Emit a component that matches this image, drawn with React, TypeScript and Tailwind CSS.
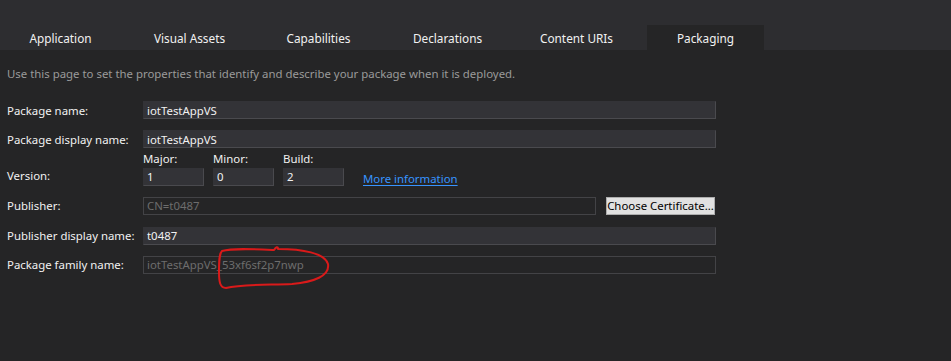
import React from 'react'

// 画面上部のタブ一覧。Packaging だけが選択状態。
const tabs = ['Application', 'Visual Assets', 'Capabilities', 'Declarations', 'Content URIs', 'Packaging']

const font = { fontFamily: '"Noto Sans", "Open Sans", sans-serif' }

function TextBox({ value, disabled, width }: { value: string; disabled?: boolean; width: string }) {
  return (
    <div
      className={
        disabled
          ? `${width} flex h-[18px] items-center border border-[#434346] bg-[#252526] px-[3px] text-[#6d6d6d]`
          : `${width} flex h-[18px] items-center border border-[#333337] border-b-[#4a4a4e] border-r-[#4a4a4e] bg-[#333337] px-[3px] text-[#f1f1f1]`
      }
    >
      {value}
    </div>
  )
}

function Row({ label, children, className }: { label: string; children: React.ReactNode; className?: string }) {
  return (
    <div className={`flex items-center ${className ?? ''}`}>
      <div className="w-[136px] shrink-0 whitespace-nowrap text-[#f1f1f1]">{label}</div>
      {children}
    </div>
  )
}

export default function App() {
  return (
    <div className="relative h-[361px] w-[951px] overflow-hidden bg-[#252526] text-[11.4px] leading-none" style={font}>
      <div className="flex h-[50px] items-end bg-[#2d2d30] pl-[2px]">
        {tabs.map((t) => (
          <div
            key={t}
            className={`mr-[12px] flex h-[25px] w-[117px] items-center justify-center pt-[3px] text-[11.8px] text-[#f1f1f1] ${
              t === 'Packaging' ? 'bg-[#252526]' : ''
            }`}
          >
            {t}
          </div>
        ))}
      </div>

      <div className="px-[7px]">
        <p className="mt-[18px] text-[#9a9a9a]">
          Use this page to set the properties that identify and describe your package when it is deployed.
        </p>

        <Row label="Package name:" className="mt-[22px]">
          <TextBox value="iotTestAppVS" width="w-[573px]" />
        </Row>
        <Row label="Package display name:" className="mt-[11px]">
          <TextBox value="iotTestAppVS" width="w-[573px]" />
        </Row>

        <div className="mt-[5px] flex items-end">
          <div className="mb-[4px] w-[136px] shrink-0 text-[#f1f1f1]">Version:</div>
          <div className="flex items-end gap-[9px]">
            {[
              ['Major:', '1'],
              ['Minor:', '0'],
              ['Build:', '2'],
            ].map(([l, v]) => (
              <div key={l} className="flex flex-col">
                <span className="mb-[3px] text-[#f1f1f1]">{l}</span>
                <TextBox value={v} width="w-[61px]" />
              </div>
            ))}
            <a className="mb-[1px] ml-[10px] text-[#3794ff] underline underline-offset-2">More information</a>
          </div>
        </div>

        <Row label="Publisher:" className="mt-[11px]">
          <TextBox value="CN=t0487" disabled width="w-[453px]" />
          <button className="ml-[10px] flex h-[18px] w-[109px] items-center justify-center whitespace-nowrap border border-[#adadad] bg-[#e1e1e1] text-[11.4px] text-black">
            Choose Certificate...
          </button>
        </Row>
        <Row label="Publisher display name:" className="mt-[12px]">
          <TextBox value="t0487" width="w-[573px]" />
        </Row>
        <Row label="Package family name:" className="mt-[11px]">
          <TextBox value="iotTestAppVS_53xf6sf2p7nwp" disabled width="w-[573px]" />
        </Row>
      </div>

      {/* 手書きの赤い丸 */}
      <svg className="absolute left-[212px] top-[242px]" width="124" height="52" viewBox="0 0 124 52" fill="none">
        <path
          d="M62 8 C64 5 66 4 66 7 C90 7 113 11 116 22 C118 34 102 40 80 42 C55 43 30 42 14 46 C8 46 7 40 7 30 C7 20 7 12 10 9 C20 6 40 7 62 8"
          stroke="#d91a1a"
          strokeWidth="2"
          strokeLinecap="round"
          strokeLinejoin="round"
        />
      </svg>
    </div>
  )
}
